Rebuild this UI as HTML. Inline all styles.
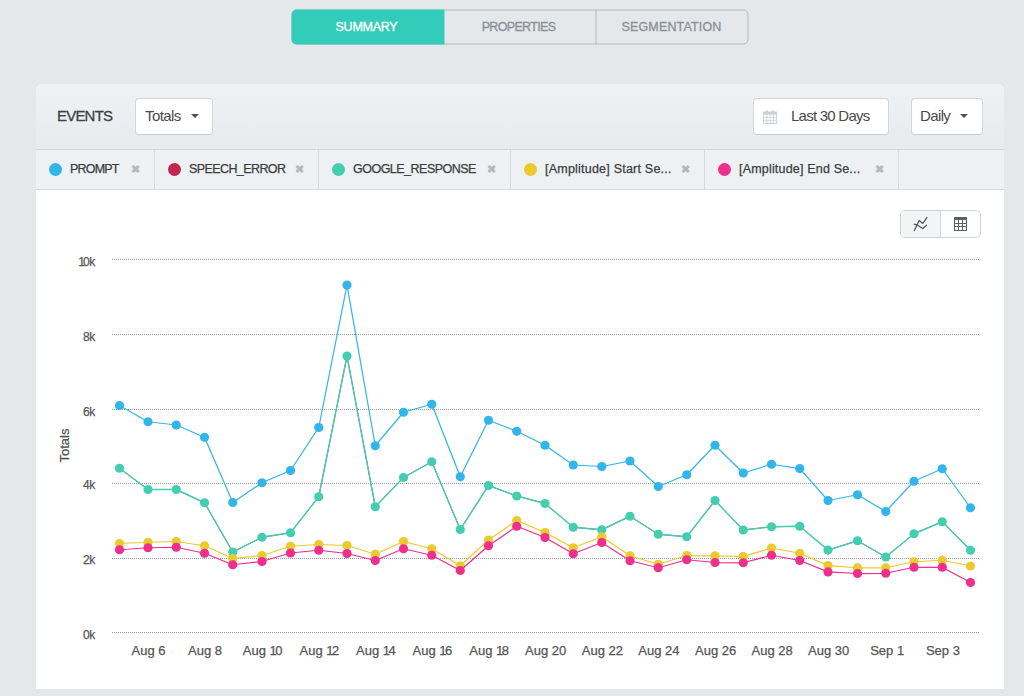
<!DOCTYPE html>
<html lang="en">
<head>
<meta charset="utf-8">
<title>Events Summary</title>
<style>
*{box-sizing:border-box;margin:0;padding:0}
html,body{width:1024px;height:696px;overflow:hidden}
body{background:#e4e8eb;font-family:"Liberation Sans",sans-serif;color:#444;position:relative}
.abs{position:absolute}
.tabs{position:absolute;left:292px;top:10px;transform:translate(-0.5px,-0.5px);width:457px;height:35px;border:1px solid #b4b9be;border-radius:5px;background:#e4e8eb}
.tab{position:absolute;top:-1px;height:35px;line-height:34px;text-align:center;font-size:12.5px;color:#8a9096;white-space:nowrap;-webkit-text-stroke:0.3px currentColor}
.tab.on{left:-1px;width:153px;padding-right:3px;background:#33ccba;color:#fff;border-radius:5px 0 0 5px}
.tab.t2{left:152px;width:152px;padding-right:3px;border-right:1px solid #b4b9be}
.tab.t3{left:304px;width:152px;padding-right:2px}
.card{position:absolute;left:36px;top:84px;width:968px;height:605px;background:#fff;border-radius:6px 6px 0 0;overflow:hidden}
.hdr{position:absolute;left:0;top:0;width:968px;height:66px;background:linear-gradient(#eff2f4,#e7ebed);border-bottom:1px solid #d3d8dc}
.legend{position:absolute;left:0;top:66px;width:968px;height:40px;background:#eef1f3;border-bottom:1px solid #d9dde0}
.btn{position:absolute;top:14px;height:37px;background:#fff;border:1px solid #d2d6da;border-bottom-color:#c6cbcf;border-radius:4px;font-size:15px;line-height:34px;color:#4a4a4a;white-space:nowrap}
.caret{position:absolute;width:0;height:0;border-left:4px solid transparent;border-right:4px solid transparent;border-top:4.5px solid #505050;top:15px}
.ttl{-webkit-text-stroke:0.3px currentColor;position:absolute;left:21px;top:14px;height:37px;line-height:35px;font-size:15px;color:#3f3f3f;white-space:nowrap}
.li{position:absolute;top:0;height:39px;border-right:1px solid #d6dade}
.li .dot{position:absolute;left:13px;top:13px;width:13px;height:13px;border-radius:50%}
.li .lt{-webkit-text-stroke:0.25px currentColor;position:absolute;left:34px;top:0;line-height:38px;font-size:12.5px;color:#3c3c3c;white-space:nowrap}
.li .x{position:absolute;top:0;line-height:38px;font-size:11px;color:#b3b8bc;font-weight:bold}
.tog{position:absolute;left:864px;top:126px;width:81px;height:28px;border:1px solid #cfd4d8;border-radius:5px;background:#fff;overflow:hidden}
.tog .l{position:absolute;left:0;top:0;width:40px;height:26px;background:#f2f4f5;border-right:1px solid #cfd4d8}
svg.chart{position:absolute;left:0;top:0}
svg text{font-family:"Liberation Sans",sans-serif;fill:#555;stroke:#555;stroke-width:0.25px}
svg .yl{font-size:12px;letter-spacing:-0.35px}
svg .xl{font-size:13px}
svg .yt{font-size:13px}
</style>
</head>
<body>
<div class="tabs">
  <div class="tab on" style="letter-spacing:-0.25px">SUMMARY</div>
  <div class="tab t2" style="letter-spacing:-0.67px">PROPERTIES</div>
  <div class="tab t3" style="letter-spacing:0.15px">SEGMENTATION</div>
</div>
<div class="card">
  <div class="hdr">
    <div class="ttl" style="letter-spacing:-0.8px">EVENTS</div>
    <div class="btn" style="left:99px;width:78px;padding-left:9px;letter-spacing:-0.6px">Totals<span class="caret" style="left:55px"></span></div>
    <div class="btn" style="left:717px;width:136px;padding-left:37px;letter-spacing:-0.75px">Last 30 Days
      <svg class="abs" style="left:9px;top:11px" width="15" height="15" viewBox="0 0 15 15"><rect x="0" y="1.4" width="14.2" height="12.6" rx="1.2" fill="#cbd0d6"/><rect x="3.2" y="0.2" width="1.8" height="2.6" rx="0.6" fill="#cbd0d6"/><rect x="9.2" y="0.2" width="1.8" height="2.6" rx="0.6" fill="#cbd0d6"/><g fill="#fff"><rect x="1.00" y="4.60" width="2.4" height="2.3"/><rect x="4.25" y="4.60" width="2.4" height="2.3"/><rect x="7.50" y="4.60" width="2.4" height="2.3"/><rect x="10.75" y="4.60" width="2.4" height="2.3"/><rect x="1.00" y="7.65" width="2.4" height="2.3"/><rect x="4.25" y="7.65" width="2.4" height="2.3"/><rect x="7.50" y="7.65" width="2.4" height="2.3"/><rect x="10.75" y="7.65" width="2.4" height="2.3"/><rect x="1.00" y="10.70" width="2.4" height="2.3"/><rect x="4.25" y="10.70" width="2.4" height="2.3"/><rect x="7.50" y="10.70" width="2.4" height="2.3"/><rect x="10.75" y="10.70" width="2.4" height="2.3"/></g></svg>
    </div>
    <div class="btn" style="left:875px;width:72px;padding-left:8px;letter-spacing:-0.62px">Daily<span class="caret" style="left:48px"></span></div>
  </div>
  <div class="legend">
    <div class="li" style="left:0;width:119px"><span class="dot" style="background:#33b5ea"></span><span class="lt" style="letter-spacing:-0.8px">PROMPT</span><span class="x" style="left:95px">✖</span></div>
    <div class="li" style="left:119px;width:164px"><span class="dot" style="background:#c0274c"></span><span class="lt" style="letter-spacing:-0.59px">SPEECH_ERROR</span><span class="x" style="left:140px">✖</span></div>
    <div class="li" style="left:283px;width:192px"><span class="dot" style="background:#45cdb0"></span><span class="lt" style="letter-spacing:-0.51px">GOOGLE_RESPONSE</span><span class="x" style="left:168px">✖</span></div>
    <div class="li" style="left:475px;width:194px"><span class="dot" style="background:#eaca2c"></span><span class="lt" style="letter-spacing:0.22px">[Amplitude] Start Se...</span><span class="x" style="left:170px">✖</span></div>
    <div class="li" style="left:669px;width:194px"><span class="dot" style="background:#ee2f8b"></span><span class="lt" style="letter-spacing:0.185px">[Amplitude] End Se...</span><span class="x" style="left:170px">✖</span></div>
  </div>
  <div class="tog"><div class="l"></div>
    <svg class="abs" style="left:0;top:0" width="81" height="26" viewBox="0 0 81 26"><g fill="none" stroke="#4f5358" stroke-width="1.25" stroke-linecap="round" stroke-linejoin="round"><path d="M13.4 19.4 L18.1 9.6 L21.8 12.5 L25.9 6.7"/><path d="M13.2 13.2 L15.8 13.8 L21.8 17.5 L25.6 14.1"/></g>
    <g transform="translate(53,6)"><rect x="0" y="0" width="13" height="14" rx="0.6" fill="#5b6066"/><g fill="#fff"><rect x="1" y="3" width="3" height="3"/><rect x="5" y="3" width="3" height="3"/><rect x="9" y="3" width="3" height="3"/><rect x="1" y="7" width="3" height="2"/><rect x="5" y="7" width="3" height="2"/><rect x="9" y="7" width="3" height="2"/><rect x="1" y="10" width="3" height="3"/><rect x="5" y="10" width="3" height="3"/><rect x="9" y="10" width="3" height="3"/></g></g></svg>
  </div>
</div>
<svg class="chart" width="1024" height="696" viewBox="0 0 1024 696">
<line x1="112" x2="980" y1="259.5" y2="259.5" stroke="#9a9ea3" stroke-width="1" stroke-dasharray="1,1"/>
<text x="95" y="265.5" text-anchor="end" class="yl"><tspan letter-spacing="-1.8">1</tspan>0k</text>
<line x1="112" x2="980" y1="334.5" y2="334.5" stroke="#9a9ea3" stroke-width="1" stroke-dasharray="1,1"/>
<text x="95" y="340.5" text-anchor="end" class="yl">8k</text>
<line x1="112" x2="980" y1="409.5" y2="409.5" stroke="#9a9ea3" stroke-width="1" stroke-dasharray="1,1"/>
<text x="95" y="415.5" text-anchor="end" class="yl">6k</text>
<line x1="112" x2="980" y1="483.5" y2="483.5" stroke="#9a9ea3" stroke-width="1" stroke-dasharray="1,1"/>
<text x="95" y="489.3" text-anchor="end" class="yl">4k</text>
<line x1="112" x2="980" y1="558.5" y2="558.5" stroke="#9a9ea3" stroke-width="1" stroke-dasharray="1,1"/>
<text x="95" y="564.4" text-anchor="end" class="yl">2k</text>
<line x1="112" x2="980" y1="632.5" y2="632.5" stroke="#9a9ea3" stroke-width="1" stroke-dasharray="1,1"/>
<text x="95" y="638.5" text-anchor="end" class="yl">0k</text>
<text x="148.6" y="654.7" text-anchor="middle" class="xl">Aug 6</text>
<text x="205.1" y="654.7" text-anchor="middle" class="xl">Aug 8</text>
<text x="262.6" y="654.7" text-anchor="middle" class="xl">Aug <tspan letter-spacing="-1.6">1</tspan>0</text>
<text x="319.4" y="654.7" text-anchor="middle" class="xl">Aug <tspan letter-spacing="-1.6">1</tspan>2</text>
<text x="375.9" y="654.7" text-anchor="middle" class="xl">Aug <tspan letter-spacing="-1.6">1</tspan>4</text>
<text x="432.4" y="654.7" text-anchor="middle" class="xl">Aug <tspan letter-spacing="-1.6">1</tspan>6</text>
<text x="489.1" y="654.7" text-anchor="middle" class="xl">Aug <tspan letter-spacing="-1.6">1</tspan>8</text>
<text x="545.6" y="654.7" text-anchor="middle" class="xl">Aug 20</text>
<text x="602.4" y="654.7" text-anchor="middle" class="xl">Aug 22</text>
<text x="658.9" y="654.7" text-anchor="middle" class="xl">Aug 24</text>
<text x="715.6" y="654.7" text-anchor="middle" class="xl">Aug 26</text>
<text x="772.1" y="654.7" text-anchor="middle" class="xl">Aug 28</text>
<text x="828.6" y="654.7" text-anchor="middle" class="xl">Aug 30</text>
<text x="886.4" y="654.7" text-anchor="middle" class="xl">Sep <tspan letter-spacing="-1.6">1</tspan></text>
<text x="942.9" y="654.7" text-anchor="middle" class="xl">Sep 3</text>
<text transform="translate(68.6,445.5) rotate(-90)" text-anchor="middle" class="yt">Totals</text>
<polyline points="119.50,405.50 148.00,421.75 176.25,425.00 204.50,437.25 232.75,502.50 262.00,482.75 290.50,470.50 318.75,427.50 347.00,285.00 375.25,445.75 403.50,412.25 431.75,404.25 460.25,476.75 488.50,420.25 516.75,431.25 545.00,445.25 573.25,465.00 601.75,466.50 630.00,461.00 658.25,486.50 686.75,474.75 715.00,445.25 743.25,473.00 771.50,464.25 799.75,468.60 828.00,500.50 857.50,494.75 885.75,511.50 914.00,481.25 942.25,468.75 970.50,507.75" fill="none" stroke="#33b5ea" stroke-width="1.25" stroke-linejoin="round" stroke-linecap="round"/>
<circle cx="119.50" cy="405.50" r="4.6" fill="#33b5ea"/><circle cx="148.00" cy="421.75" r="4.6" fill="#33b5ea"/><circle cx="176.25" cy="425.00" r="4.6" fill="#33b5ea"/><circle cx="204.50" cy="437.25" r="4.6" fill="#33b5ea"/><circle cx="232.75" cy="502.50" r="4.6" fill="#33b5ea"/><circle cx="262.00" cy="482.75" r="4.6" fill="#33b5ea"/><circle cx="290.50" cy="470.50" r="4.6" fill="#33b5ea"/><circle cx="318.75" cy="427.50" r="4.6" fill="#33b5ea"/><circle cx="347.00" cy="285.00" r="4.6" fill="#33b5ea"/><circle cx="375.25" cy="445.75" r="4.6" fill="#33b5ea"/><circle cx="403.50" cy="412.25" r="4.6" fill="#33b5ea"/><circle cx="431.75" cy="404.25" r="4.6" fill="#33b5ea"/><circle cx="460.25" cy="476.75" r="4.6" fill="#33b5ea"/><circle cx="488.50" cy="420.25" r="4.6" fill="#33b5ea"/><circle cx="516.75" cy="431.25" r="4.6" fill="#33b5ea"/><circle cx="545.00" cy="445.25" r="4.6" fill="#33b5ea"/><circle cx="573.25" cy="465.00" r="4.6" fill="#33b5ea"/><circle cx="601.75" cy="466.50" r="4.6" fill="#33b5ea"/><circle cx="630.00" cy="461.00" r="4.6" fill="#33b5ea"/><circle cx="658.25" cy="486.50" r="4.6" fill="#33b5ea"/><circle cx="686.75" cy="474.75" r="4.6" fill="#33b5ea"/><circle cx="715.00" cy="445.25" r="4.6" fill="#33b5ea"/><circle cx="743.25" cy="473.00" r="4.6" fill="#33b5ea"/><circle cx="771.50" cy="464.25" r="4.6" fill="#33b5ea"/><circle cx="799.75" cy="468.60" r="4.6" fill="#33b5ea"/><circle cx="828.00" cy="500.50" r="4.6" fill="#33b5ea"/><circle cx="857.50" cy="494.75" r="4.6" fill="#33b5ea"/><circle cx="885.75" cy="511.50" r="4.6" fill="#33b5ea"/><circle cx="914.00" cy="481.25" r="4.6" fill="#33b5ea"/><circle cx="942.25" cy="468.75" r="4.6" fill="#33b5ea"/><circle cx="970.50" cy="507.75" r="4.6" fill="#33b5ea"/>
<polyline points="119.50,468.25 148.00,489.50 176.25,489.50 204.50,502.75 232.75,552.00 262.00,537.25 290.50,532.75 318.75,496.75 347.00,356.00 375.25,506.75 403.50,477.50 431.75,461.75 460.25,529.50 488.50,485.50 516.75,496.00 545.00,503.50 573.25,527.25 601.75,529.75 630.00,516.25 658.25,534.25 686.75,536.75 715.00,500.50 743.25,530.00 771.50,526.75 799.75,526.25 828.00,550.10 857.50,540.75 885.75,557.00 914.00,533.75 942.25,521.75 970.50,550.25" fill="none" stroke="#c0274c" stroke-width="1.0" stroke-linejoin="round" stroke-linecap="round"/>
<polyline points="119.50,468.25 148.00,489.50 176.25,489.50 204.50,502.75 232.75,552.00 262.00,537.25 290.50,532.75 318.75,496.75 347.00,356.00 375.25,506.75 403.50,477.50 431.75,461.75 460.25,529.50 488.50,485.50 516.75,496.00 545.00,503.50 573.25,527.25 601.75,529.75 630.00,516.25 658.25,534.25 686.75,536.75 715.00,500.50 743.25,530.00 771.50,526.75 799.75,526.25 828.00,550.10 857.50,540.75 885.75,557.00 914.00,533.75 942.25,521.75 970.50,550.25" fill="none" stroke="#45cdb0" stroke-width="1.4" stroke-linejoin="round" stroke-linecap="round"/>
<circle cx="119.50" cy="468.25" r="4.6" fill="#45cdb0"/><circle cx="148.00" cy="489.50" r="4.6" fill="#45cdb0"/><circle cx="176.25" cy="489.50" r="4.6" fill="#45cdb0"/><circle cx="204.50" cy="502.75" r="4.6" fill="#45cdb0"/><circle cx="232.75" cy="552.00" r="4.6" fill="#45cdb0"/><circle cx="262.00" cy="537.25" r="4.6" fill="#45cdb0"/><circle cx="290.50" cy="532.75" r="4.6" fill="#45cdb0"/><circle cx="318.75" cy="496.75" r="4.6" fill="#45cdb0"/><circle cx="347.00" cy="356.00" r="4.6" fill="#45cdb0"/><circle cx="375.25" cy="506.75" r="4.6" fill="#45cdb0"/><circle cx="403.50" cy="477.50" r="4.6" fill="#45cdb0"/><circle cx="431.75" cy="461.75" r="4.6" fill="#45cdb0"/><circle cx="460.25" cy="529.50" r="4.6" fill="#45cdb0"/><circle cx="488.50" cy="485.50" r="4.6" fill="#45cdb0"/><circle cx="516.75" cy="496.00" r="4.6" fill="#45cdb0"/><circle cx="545.00" cy="503.50" r="4.6" fill="#45cdb0"/><circle cx="573.25" cy="527.25" r="4.6" fill="#45cdb0"/><circle cx="601.75" cy="529.75" r="4.6" fill="#45cdb0"/><circle cx="630.00" cy="516.25" r="4.6" fill="#45cdb0"/><circle cx="658.25" cy="534.25" r="4.6" fill="#45cdb0"/><circle cx="686.75" cy="536.75" r="4.6" fill="#45cdb0"/><circle cx="715.00" cy="500.50" r="4.6" fill="#45cdb0"/><circle cx="743.25" cy="530.00" r="4.6" fill="#45cdb0"/><circle cx="771.50" cy="526.75" r="4.6" fill="#45cdb0"/><circle cx="799.75" cy="526.25" r="4.6" fill="#45cdb0"/><circle cx="828.00" cy="550.10" r="4.6" fill="#45cdb0"/><circle cx="857.50" cy="540.75" r="4.6" fill="#45cdb0"/><circle cx="885.75" cy="557.00" r="4.6" fill="#45cdb0"/><circle cx="914.00" cy="533.75" r="4.6" fill="#45cdb0"/><circle cx="942.25" cy="521.75" r="4.6" fill="#45cdb0"/><circle cx="970.50" cy="550.25" r="4.6" fill="#45cdb0"/>
<polyline points="119.50,543.50 148.00,542.25 176.25,541.50 204.50,545.75 232.75,558.50 262.00,555.50 290.50,546.25 318.75,544.50 347.00,545.50 375.25,554.25 403.50,541.50 431.75,548.75 460.25,565.75 488.50,540.00 516.75,520.50 545.00,532.50 573.25,547.75 601.75,536.75 630.00,555.75 658.25,564.25 686.75,555.50 715.00,555.75 743.25,556.50 771.50,548.00 799.75,553.25 828.00,565.60 857.50,567.75 885.75,567.75 914.00,561.75 942.25,560.25 970.50,566.00" fill="none" stroke="#eaca2c" stroke-width="1.25" stroke-linejoin="round" stroke-linecap="round"/>
<circle cx="119.50" cy="543.50" r="4.6" fill="#eaca2c"/><circle cx="148.00" cy="542.25" r="4.6" fill="#eaca2c"/><circle cx="176.25" cy="541.50" r="4.6" fill="#eaca2c"/><circle cx="204.50" cy="545.75" r="4.6" fill="#eaca2c"/><circle cx="232.75" cy="558.50" r="4.6" fill="#eaca2c"/><circle cx="262.00" cy="555.50" r="4.6" fill="#eaca2c"/><circle cx="290.50" cy="546.25" r="4.6" fill="#eaca2c"/><circle cx="318.75" cy="544.50" r="4.6" fill="#eaca2c"/><circle cx="347.00" cy="545.50" r="4.6" fill="#eaca2c"/><circle cx="375.25" cy="554.25" r="4.6" fill="#eaca2c"/><circle cx="403.50" cy="541.50" r="4.6" fill="#eaca2c"/><circle cx="431.75" cy="548.75" r="4.6" fill="#eaca2c"/><circle cx="460.25" cy="565.75" r="4.6" fill="#eaca2c"/><circle cx="488.50" cy="540.00" r="4.6" fill="#eaca2c"/><circle cx="516.75" cy="520.50" r="4.6" fill="#eaca2c"/><circle cx="545.00" cy="532.50" r="4.6" fill="#eaca2c"/><circle cx="573.25" cy="547.75" r="4.6" fill="#eaca2c"/><circle cx="601.75" cy="536.75" r="4.6" fill="#eaca2c"/><circle cx="630.00" cy="555.75" r="4.6" fill="#eaca2c"/><circle cx="658.25" cy="564.25" r="4.6" fill="#eaca2c"/><circle cx="686.75" cy="555.50" r="4.6" fill="#eaca2c"/><circle cx="715.00" cy="555.75" r="4.6" fill="#eaca2c"/><circle cx="743.25" cy="556.50" r="4.6" fill="#eaca2c"/><circle cx="771.50" cy="548.00" r="4.6" fill="#eaca2c"/><circle cx="799.75" cy="553.25" r="4.6" fill="#eaca2c"/><circle cx="828.00" cy="565.60" r="4.6" fill="#eaca2c"/><circle cx="857.50" cy="567.75" r="4.6" fill="#eaca2c"/><circle cx="885.75" cy="567.75" r="4.6" fill="#eaca2c"/><circle cx="914.00" cy="561.75" r="4.6" fill="#eaca2c"/><circle cx="942.25" cy="560.25" r="4.6" fill="#eaca2c"/><circle cx="970.50" cy="566.00" r="4.6" fill="#eaca2c"/>
<polyline points="119.50,549.75 148.00,547.75 176.25,547.25 204.50,553.25 232.75,564.75 262.00,561.50 290.50,553.00 318.75,550.25 347.00,553.50 375.25,560.50 403.50,548.75 431.75,555.25 460.25,570.50 488.50,545.75 516.75,526.25 545.00,537.50 573.25,553.75 601.75,542.50 630.00,560.75 658.25,567.75 686.75,559.75 715.00,562.50 743.25,562.75 771.50,555.25 799.75,560.50 828.00,571.90 857.50,573.50 885.75,573.25 914.00,567.25 942.25,567.25 970.50,582.50" fill="none" stroke="#ee2f8b" stroke-width="1.25" stroke-linejoin="round" stroke-linecap="round"/>
<circle cx="119.50" cy="549.75" r="4.6" fill="#ee2f8b"/><circle cx="148.00" cy="547.75" r="4.6" fill="#ee2f8b"/><circle cx="176.25" cy="547.25" r="4.6" fill="#ee2f8b"/><circle cx="204.50" cy="553.25" r="4.6" fill="#ee2f8b"/><circle cx="232.75" cy="564.75" r="4.6" fill="#ee2f8b"/><circle cx="262.00" cy="561.50" r="4.6" fill="#ee2f8b"/><circle cx="290.50" cy="553.00" r="4.6" fill="#ee2f8b"/><circle cx="318.75" cy="550.25" r="4.6" fill="#ee2f8b"/><circle cx="347.00" cy="553.50" r="4.6" fill="#ee2f8b"/><circle cx="375.25" cy="560.50" r="4.6" fill="#ee2f8b"/><circle cx="403.50" cy="548.75" r="4.6" fill="#ee2f8b"/><circle cx="431.75" cy="555.25" r="4.6" fill="#ee2f8b"/><circle cx="460.25" cy="570.50" r="4.6" fill="#ee2f8b"/><circle cx="488.50" cy="545.75" r="4.6" fill="#ee2f8b"/><circle cx="516.75" cy="526.25" r="4.6" fill="#ee2f8b"/><circle cx="545.00" cy="537.50" r="4.6" fill="#ee2f8b"/><circle cx="573.25" cy="553.75" r="4.6" fill="#ee2f8b"/><circle cx="601.75" cy="542.50" r="4.6" fill="#ee2f8b"/><circle cx="630.00" cy="560.75" r="4.6" fill="#ee2f8b"/><circle cx="658.25" cy="567.75" r="4.6" fill="#ee2f8b"/><circle cx="686.75" cy="559.75" r="4.6" fill="#ee2f8b"/><circle cx="715.00" cy="562.50" r="4.6" fill="#ee2f8b"/><circle cx="743.25" cy="562.75" r="4.6" fill="#ee2f8b"/><circle cx="771.50" cy="555.25" r="4.6" fill="#ee2f8b"/><circle cx="799.75" cy="560.50" r="4.6" fill="#ee2f8b"/><circle cx="828.00" cy="571.90" r="4.6" fill="#ee2f8b"/><circle cx="857.50" cy="573.50" r="4.6" fill="#ee2f8b"/><circle cx="885.75" cy="573.25" r="4.6" fill="#ee2f8b"/><circle cx="914.00" cy="567.25" r="4.6" fill="#ee2f8b"/><circle cx="942.25" cy="567.25" r="4.6" fill="#ee2f8b"/><circle cx="970.50" cy="582.50" r="4.6" fill="#ee2f8b"/>
</svg>
</body>
</html>
